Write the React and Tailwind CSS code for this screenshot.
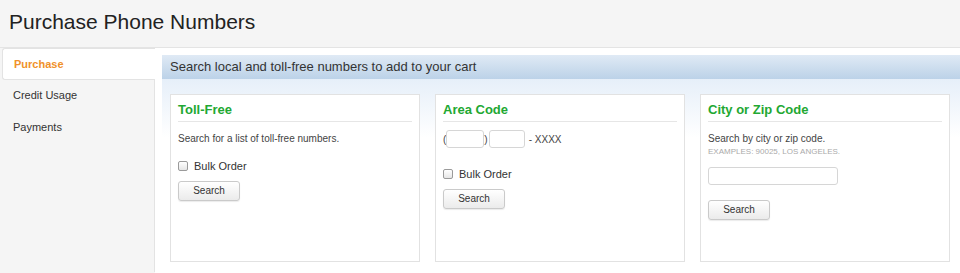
import React from "react";

const font = { fontFamily: '"Liberation Sans", Arial, Helvetica, sans-serif' };

function Checkbox() {
  return (
    <span className="inline-block w-[10px] h-[10px] rounded-[2px] border border-[#9a9a9a] bg-gradient-to-b from-white to-[#e6e6e6] shrink-0" />
  );
}

function Button() {
  return (
    <button className="block w-[62px] h-[20px] rounded-[3px] border border-[#cacaca] bg-gradient-to-b from-white to-[#ebebeb] shadow-[0_1px_1px_rgba(0,0,0,0.08)] text-[10px] leading-[18px] text-[#333] text-center">
      Search
    </button>
  );
}

function Card({ title, children }) {
  return (
    <div className="h-[168px] bg-white border border-[#e2e2e2] px-[7px] pt-[7px]">
      <div className="h-[20px] text-[13px] leading-[16px] font-bold text-[#22a832] border-b border-[#e6e6e6]">
        {title}
      </div>
      {children}
    </div>
  );
}

export default function App() {
  return (
    <div className="w-[960px] h-[273px] overflow-hidden bg-[#f5f5f5] text-[#333]" style={font}>
      <div className="h-[48px] border-b border-[#e4e4e4] pl-[9px] pt-[9px]">
        <div className="text-[21px] leading-[25px] text-[#222]">Purchase Phone Numbers</div>
      </div>
      <div className="flex h-[225px]">
        <div className="w-[155px] shrink-0 pl-[2px]">
          <div className="h-[32px] bg-white border border-[#e3e3e3] border-r-0 rounded-l-[3px] pl-[11px] flex items-center text-[11px] font-bold text-[#f0912a]">
            Purchase
          </div>
          <div className="border-r border-[#e3e3e3] h-[193px] -mt-[1px]">
            <div className="h-[32px] pl-[11px] flex items-center text-[11px] text-[#333]">Credit Usage</div>
            <div className="h-[32px] pl-[11px] flex items-center text-[11px] text-[#333]">Payments</div>
          </div>
        </div>
        <div className="flex-1 bg-white pl-[7px] pt-[7px]">
          <div className="h-[24px] bg-gradient-to-b from-[#e0eaf5] to-[#bcd2e8] pl-[8px] flex items-center text-[13px] text-[#333]">
            Search local and toll-free numbers to add to your cart
          </div>
          <div className="bg-gradient-to-b from-[#e6eff9] to-white to-[30%] h-[194px] pl-[8px] pr-[10px] pt-[15px]">
            <div className="grid grid-cols-3 gap-[15px]">
              <Card title="Toll-Free">
                <div className="mt-[10px] text-[10px] leading-[14px] text-[#444]">
                  Search for a list of toll-free numbers.
                </div>
                <div className="mt-[13px] h-[14px] flex items-center gap-[6px] text-[11px] text-[#333]">
                  <Checkbox />
                  <span>Bulk Order</span>
                </div>
                <div className="mt-[8px] flex">
                  <Button />
                </div>
              </Card>
              <Card title="Area Code">
                <div className="mt-[8px] h-[18px] flex items-center text-[10px] text-[#444]">
                  <span>(</span>
                  <span className="w-[38px] h-[18px] border border-[#d6d6d6] rounded-[3px] bg-white" />
                  <span>)</span>
                  <span className="ml-[1px] w-[36px] h-[18px] border border-[#d6d6d6] rounded-[3px] bg-white" />
                  <span className="ml-[4px]">- XXXX</span>
                </div>
                <div className="mt-[19px] h-[14px] flex items-center gap-[6px] text-[11px] text-[#333]">
                  <Checkbox />
                  <span>Bulk Order</span>
                </div>
                <div className="mt-[8px] flex">
                  <Button />
                </div>
              </Card>
              <Card title="City or Zip Code">
                <div className="mt-[10px] text-[10px] leading-[14px] text-[#444]">
                  Search by city or zip code.
                </div>
                <div className="mt-[1px] text-[8px] leading-[10px] text-[#aaa]">
                  EXAMPLES: 90025, LOS ANGELES.
                </div>
                <div className="mt-[10px] w-[130px] h-[18px] border border-[#d6d6d6] rounded-[3px] bg-white" />
                <div className="mt-[15px] flex">
                  <Button />
                </div>
              </Card>
            </div>
          </div>
        </div>
      </div>
    </div>
  );
}
